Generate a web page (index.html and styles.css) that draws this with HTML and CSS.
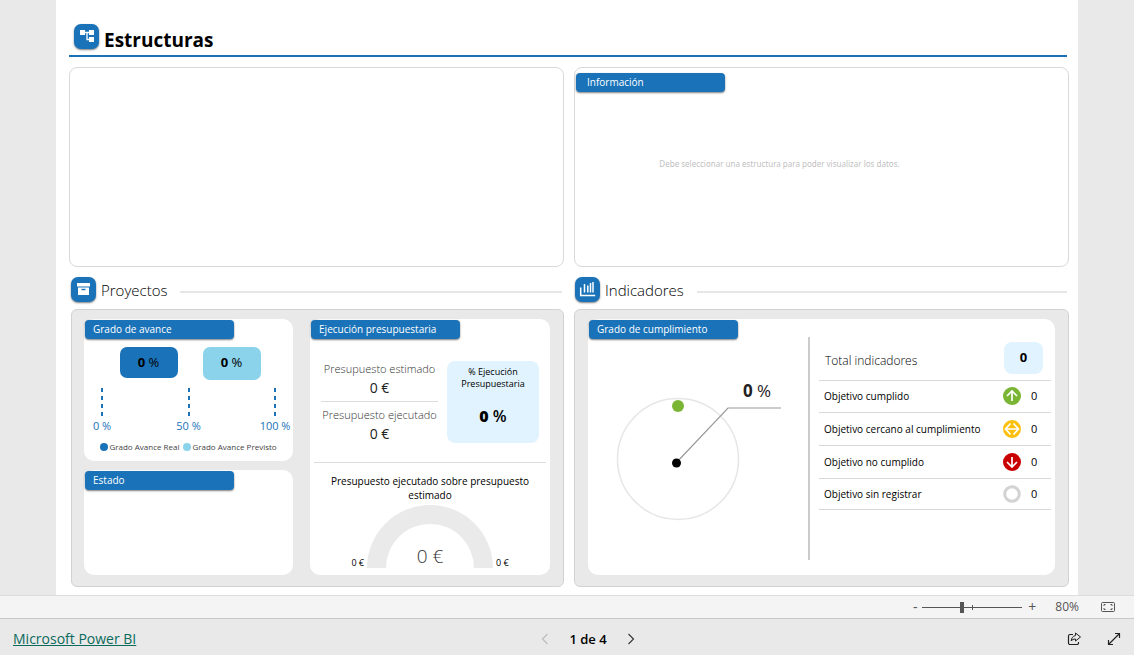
FILE: index.html
```html
<!DOCTYPE html>
<html lang="es">
<head>
<meta charset="utf-8">
<title>Estructuras</title>
<link rel="stylesheet" href="styles.css">
</head>
<body>
<main class="stage">
  <div class="sheet">
    <header class="title-bar">
      <span class="icon-tile">
        <svg viewBox="0 0 25 25" width="25" height="25" aria-hidden="true"><path d="M6 6h5v5H6zM15 6h5v5h-5zM15 13h5v5h-5z" fill="#fff"/><path d="M11 8.5h4M13 8.5v7h2" fill="none" stroke="#fff" stroke-width="1.3"/></svg>
      </span>
      <h1 class="title">Estructuras</h1>
    </header>

    <div class="columns">
      <section class="box" aria-label="Estructuras"></section>
      <section class="box">
        <h3 class="tag tag-wide">Información</h3>
        <p class="hint">Debe seleccionar una estructura para poder visualizar los datos.</p>
      </section>
    </div>

    <div class="columns">
      <section class="group">
        <header class="group-head group-head-projects">
          <span class="icon-tile">
            <svg viewBox="0 0 25 25" width="25" height="25" aria-hidden="true"><path d="M6 6h13v3.5H6z" fill="#fff"/><path d="M7 10.500h11V18H7z" fill="#fff"/><path d="M10.500 12.500h4" stroke="#1a73b9" stroke-width="1.400"/></svg>
          </span>
          <h2 class="group-title">Proyectos</h2>
          <span class="rule"></span>
        </header>
        <div class="panel panel-projects">
          <div class="stack">
            <section class="card card-progress">
              <h3 class="tag">Grado de avance</h3>
              <div class="chips">
                <span class="chip chip-real"><b>0</b> %</span>
                <span class="chip chip-plan"><b>0</b> %</span>
              </div>
              <div class="axis">
                <span class="mark">0 %</span>
                <span class="mark">50 %</span>
                <span class="mark">100 %</span>
              </div>
              <div class="legend">
                <span class="key key-real">Grado Avance Real</span>
                <span class="key key-plan">Grado Avance Previsto</span>
              </div>
            </section>
            <section class="card card-state">
              <h3 class="tag">Estado</h3>
            </section>
          </div>
          <section class="card card-budget">
            <h3 class="tag">Ejecución presupuestaria</h3>
            <div class="budget">
              <dl class="amounts">
                <div class="amount"><dt>Presupuesto estimado</dt><dd>0 €</dd></div>
                <div class="amount"><dt>Presupuesto ejecutado</dt><dd>0 €</dd></div>
              </dl>
              <div class="share">
                <span>% Ejecución Presupuestaria</span>
                <strong class="share-value"><b>0</b> %</strong>
              </div>
            </div>
            <div class="gauge-block">
              <p class="gauge-title">Presupuesto ejecutado sobre presupuesto estimado</p>
              <div class="gauge">
                <span>0 €</span>
                <svg class="gauge-arc" viewBox="0 0 126 63" width="126" height="63" role="img" aria-label="0 €"><path d="M0 63a63 63 0 0 1 126 0h-19a44 44 0 0 0-88 0z" fill="#eaeaea"/><text class="gauge-value" x="63" y="58" text-anchor="middle">0 €</text></svg>
                <span>0 €</span>
              </div>
            </div>
          </section>
        </div>
      </section>

      <section class="group">
        <header class="group-head">
          <span class="icon-tile">
            <svg viewBox="0 0 25 25" width="25" height="25" aria-hidden="true"><path d="M5.700 10.500v8h14.500" fill="none" stroke="#fff" stroke-width="1.500"/><path d="M9.500 15.500V7M12.800 15.500V8.500M15.500 15.500V6M18 15.500V5" fill="none" stroke="#fff" stroke-width="1.500"/></svg>
          </span>
          <h2 class="group-title">Indicadores</h2>
          <span class="rule"></span>
        </header>
        <div class="panel">
          <section class="card card-goals">
            <div class="dial">
              <h3 class="tag">Grado de cumplimiento</h3>
              <svg viewBox="0 0 219 200" width="219" height="200" role="img" aria-label="0 %">
                <circle cx="89" cy="120" r="60.500" fill="none" stroke="#e6e6e6" stroke-width="1.500"/>
                <circle cx="89" cy="67" r="6" fill="#7ab534"/>
                <path d="M87 124l52-55h53" fill="none" stroke="#999" stroke-width="1.200"/>
                <circle cx="87.500" cy="124" r="4.500" fill="#000"/>
                <text class="dial-value" x="168" y="58" text-anchor="middle"><tspan class="strong">0</tspan> %</text>
              </svg>
            </div>
            <div class="goals-wrap">
              <table class="goals">
                <tbody>
                  <tr class="total"><th scope="row">Total indicadores</th><td colspan="2"><span class="total-value">0</span></td></tr>
                  <tr class="met"><th scope="row">Objetivo cumplido</th><td class="state"><svg viewBox="0 0 18 18" width="18" height="18" aria-hidden="true"><circle cx="9" cy="9" r="9" fill="#7ab534"/><path d="M9 14V4.500M4 9l5-5 5 5" fill="none" stroke="#fff" stroke-width="1.700"/></svg></td><td class="count">0</td></tr>
                  <tr><th scope="row">Objetivo cercano al cumplimiento</th><td class="state"><svg viewBox="0 0 18 18" width="18" height="18" aria-hidden="true"><circle cx="9" cy="9" r="9" fill="#fcc00f"/><path d="M2.500 9h13M7.500 3.500L2.500 9l5 5.500M10.500 3.500l5 5.500-5 5.500" fill="none" stroke="#fff" stroke-width="1.700"/></svg></td><td class="count">0</td></tr>
                  <tr><th scope="row">Objetivo no cumplido</th><td class="state"><svg viewBox="0 0 18 18" width="18" height="18" aria-hidden="true"><circle cx="9" cy="9" r="9" fill="#c90000"/><path d="M9 4v9.500M4 9l5 5 5-5" fill="none" stroke="#fff" stroke-width="1.700"/></svg></td><td class="count">0</td></tr>
                  <tr class="last"><th scope="row">Objetivo sin registrar</th><td class="state"><svg viewBox="0 0 18 18" width="18" height="18" aria-hidden="true"><circle cx="9" cy="9" r="7.300" fill="none" stroke="#d3d3d3" stroke-width="3"/></svg></td><td class="count">0</td></tr>
                </tbody>
              </table>
            </div>
          </section>
        </div>
      </section>
    </div>
  </div>
</main>

<div class="zoom-bar">
  <button class="zoom-button" type="button" aria-label="Alejar">-</button>
  <input class="zoom-range" type="range" min="10" max="190" value="80" aria-label="Zoom">
  <button class="zoom-button" type="button" aria-label="Acercar">+</button>
  <button class="zoom-level" type="button">80%</button>
  <button class="icon-button" type="button" aria-label="Ajustar a la página"><svg viewBox="0 0 14 10" width="14" height="10"><rect x=".5" y=".5" width="13" height="9" rx="1" fill="none" stroke="#555"/><path d="M3 4V2.500h1.500M9.500 2.500H11V4M11 6v1.500H9.500M4.500 7.500H3V6" fill="none" stroke="#555"/></svg></button>
</div>

<footer class="footer">
  <div class="footer-side"><a class="brand" href="#">Microsoft Power BI</a></div>
  <nav class="pager" aria-label="Páginas">
    <button class="icon-button" type="button" disabled aria-label="Anterior"><svg viewBox="0 0 8 12" width="8" height="12"><path d="M6.500 1l-5 5 5 5" fill="none" stroke="#bbb" stroke-width="1.100"/></svg></button>
    <span class="page-count">1 de 4</span>
    <button class="icon-button" type="button" aria-label="Siguiente"><svg viewBox="0 0 8 12" width="8" height="12"><path d="M1.500 1l5 5-5 5" fill="none" stroke="#333" stroke-width="1.100"/></svg></button>
  </nav>
  <div class="footer-side footer-actions">
    <button class="icon-button" type="button" aria-label="Compartir"><svg viewBox="0 0 14 14" width="14" height="14"><path d="M6 2.500H3a1.500 1.500 0 0 0-1.500 1.500v7A1.500 1.500 0 0 0 3 12.500h7a1.500 1.500 0 0 0 1.500-1.500v-1" fill="none" stroke="#222" stroke-width="1.200"/><path d="M8.500 1l5 4-5 4V7c-2 0-3.300.6-4.300 2 .2-3 1.800-5 4.300-5.500z" fill="none" stroke="#222" stroke-linejoin="round"/></svg></button>
    <button class="icon-button" type="button" aria-label="Pantalla completa"><svg viewBox="0 0 14 14" width="14" height="14"><path d="M1.500 12.500l11-11M8 1.500h4.500V6M1.500 8v4.500H6" fill="none" stroke="#222" stroke-width="1.200"/></svg></button>
  </div>
</footer>
</body>
</html>
```

FILE: styles.css
```css
* { box-sizing: border-box; }

body {
  margin: 0;
  min-height: 100vh;
  display: flex;
  flex-direction: column;
  background: #e9e9e9;
  color: #000;
  font-family: "Open Sans", "Noto Sans", sans-serif;
  font-size: 11px;
  line-height: 14px;
}

h1, h2, h3, p, dl, dd { margin: 0; font-weight: 400; }

button {
  padding: 0;
  border: 0;
  background: none;
  color: inherit;
  font: inherit;
}

svg { display: block; flex: none; }

.stage { flex: 1; display: flex; padding: 0 56px; }

.sheet {
  flex: 1;
  min-width: 0;
  display: flex;
  flex-direction: column;
  padding: 0 9px 8px 13px;
  background: #fff;
}

.title-bar {
  display: flex;
  align-items: flex-end;
  gap: 5px;
  height: 57px;
  margin-right: 2px;
  padding: 0 0 4px 5px;
  border-bottom: 2px solid #1a73b9;
}

.title { font-size: 19px; line-height: 22px; font-weight: 700; }

.title-bar .icon-tile { margin-bottom: 2px; }

.icon-tile {
  flex: none;
  width: 25px;
  height: 25px;
  border-radius: 7px;
  background: #1a73b9;
  box-shadow: 0 1px 2px rgba(0, 0, 0, .5);
}

.columns {
  display: grid;
  grid-template-columns: 1fr 1fr;
  gap: 10px;
}

.box {
  min-height: 200px;
  margin-top: 10px;
  padding: 5px 1px;
  border: 1px solid #d9d9d9;
  border-radius: 8px;
}

.tag {
  width: 149px;
  height: 19px;
  padding: 0 8px;
  border-radius: 4px;
  background: #1a73b9;
  box-shadow: 0 1px 2px rgba(0, 0, 0, .5);
  color: #fff;
  font-size: 10px;
  line-height: 18px;
  white-space: nowrap;
}

.tag-wide { padding: 0 11px; }

.hint {
  margin-top: 65px;
  padding-right: 84px;
  color: #bfbfbf;
  font-family: "Noto Sans", "Open Sans", sans-serif;
  font-size: 8px;
  text-align: center;
}

.group { display: flex; flex-direction: column; min-width: 0; }

.group-head {
  display: flex;
  align-items: center;
  gap: 5px;
  height: 42px;
  padding: 3px 2px 0 1px;
}

.group-head-projects { padding-left: 2px; }

.group-title { font-size: 15px; font-weight: 300; line-height: 20px; }

.rule { flex: 1; height: 2px; margin: 4px 0 0 8px; background: #e6e6e6; }

.panel {
  display: flex;
  gap: 17px;
  min-height: 278px;
  padding: 9px 13px 11px;
  border: 1px solid #d2d2d2;
  border-radius: 6px;
  background: #e9e9e9;
}

.panel-projects { margin-left: 2px; padding-left: 12px; }

.stack { flex: 210; display: flex; flex-direction: column; gap: 9px; }

.card { padding: 1px; border-radius: 10px; background: #fff; }

.card-progress { height: 142px; }
.card-state { flex: 1; }
.card-budget { flex: 239; }

.chips { display: flex; justify-content: center; gap: 25px; margin-top: 8px; padding-left: 3px; }

.chip {
  width: 58px;
  height: 31px;
  border-radius: 7px;
  font-size: 13px;
  font-weight: 400;
  line-height: 31px;
  text-align: center;
}

.chip-real { background: #1a73b9; }
.chip-plan { height: 33px; background: #8ad3ea; }

.axis { display: flex; justify-content: space-between; margin-top: 8px; }

.mark {
  width: 34px;
  padding-top: 31px;
  background: repeating-linear-gradient(#1a73b9 0 4px, transparent 4px 8px) center top / 2px 28px no-repeat;
  color: #1a73b9;
  font-size: 11px;
  line-height: 14px;
  text-align: center;
  white-space: nowrap;
}

.legend { display: flex; justify-content: center; gap: 4px; margin-top: 7px; }

.key {
  display: flex;
  align-items: center;
  gap: 1px;
  color: #444;
  font-size: 8px;
  white-space: nowrap;
}

.key::before { content: ""; width: 8px; height: 8px; border-radius: 50%; }
.key-real::before { background: #1a73b9; }
.key-plan::before { background: #8ad3ea; }

.budget {
  display: flex;
  gap: 9px;
  margin: 22px 3px 0;
  padding: 0 7px 19px;
  border-bottom: 1px solid #dcdcdc;
}

.amounts { flex: 1; font-weight: 300; text-align: center; white-space: nowrap; }

.amount { height: 40px; }
.amount + .amount { border-top: 1px solid #dcdcdc; padding-top: 5px; }
.amount dt { color: #333; font-size: 11px; line-height: 16px; }
.amount dd { color: #222; font-size: 14px; line-height: 21px; }

.share {
  flex: none;
  display: flex;
  flex-direction: column;
  gap: 18px;
  width: 92px;
  height: 82px;
  padding: 5px 12px;
  border-radius: 8px;
  background: #e1f3fe;
  font-size: 9px;
  line-height: 12px;
  text-align: center;
}

.share-value { font-size: 16px; line-height: 16px; font-weight: 600; }

.gauge-block { padding: 11px 14px 0; }

.gauge-title { text-align: center; font-size: 10px; line-height: 14px; }

.gauge {
  display: flex;
  justify-content: center;
  align-items: flex-end;
  gap: 3px;
  margin-top: 3px;
  font-size: 9px;
  line-height: 10px;
}

.gauge-arc { overflow: visible; }
.gauge-value { font-size: 19px; font-weight: 300; fill: #333; }

.card-goals { flex: 1; display: flex; min-width: 0; }

.dial { flex: 1; min-width: 0; }

.goals-wrap {
  flex: none;
  margin: 17px 3px 14px 0;
  padding-left: 9px;
  border-left: 2px solid #ccc;
}

.goals { width: 232px; border-collapse: collapse; }

.goals th { padding: 0 5px; font-size: 10px; font-weight: 400; text-align: left; white-space: nowrap; }
.goals td { padding: 0; }
.goals tr { height: 33px; border-bottom: 1px solid #d9d9d9; }
.goals .met { height: 32px; }
.goals .last { height: 31px; }
.goals .total { height: 43px; }
.goals .total th { padding: 6px 6px 0; font-size: 12px; font-weight: 300; }

.total-value {
  display: block;
  width: 39px;
  height: 32px;
  margin: 0 8px 0 auto;
  border-radius: 8px;
  background: #e1f3fe;
  font-size: 13px;
  font-weight: 700;
  line-height: 31px;
  text-align: center;
}

.goals .state { width: 20px; }
.goals .count { width: 28px; padding-left: 8px; font-size: 11px; }

.dial-value { font-size: 17px; fill: #222; }
.strong { font-weight: 700; }

.zoom-bar {
  display: flex;
  align-items: center;
  justify-content: flex-end;
  height: 23px;
  padding: 0 19px;
  border-top: 1px solid #ddd;
  background: #f4f4f4;
  color: #555;
  font-size: 12px;
}

.zoom-button { width: 14px; font-size: 14px; }

.zoom-range {
  appearance: none;
  width: 100px;
  height: 12px;
  margin: 0 3px 0 0;
  background:
    linear-gradient(#555, #555) center / 100% 1px no-repeat,
    linear-gradient(#555, #555) 50px center / 1px 5px no-repeat;
}

.zoom-range::-webkit-slider-thumb {
  appearance: none;
  width: 4px;
  height: 11px;
  background: #555;
}

.zoom-level { margin: 0 22px 0 16px; }

.footer {
  display: flex;
  align-items: center;
  height: 37px;
  padding: 3px 13px 0;
  border-top: 1px solid #c8c8c8;
  font-size: 13px;
}

.footer-side { flex: 1; }

.footer-actions { display: flex; justify-content: flex-end; gap: 26px; }

.brand { color: #0b6a5c; font-size: 14px; line-height: 18px; }

.pager { display: flex; align-items: center; gap: 20px; margin-left: 42px; }

.page-count { font-weight: 600; }
```
